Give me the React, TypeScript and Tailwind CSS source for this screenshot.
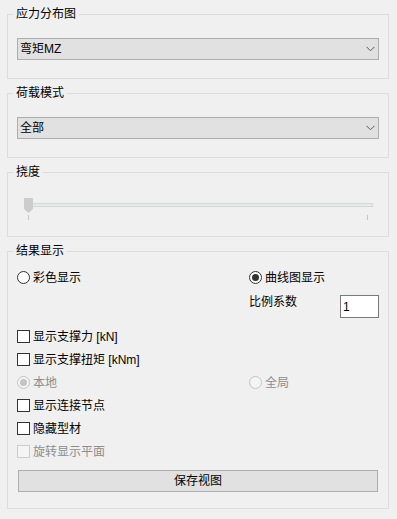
import React from 'react';

const font = { fontFamily: '"Liberation Sans", "Noto Sans CJK SC", sans-serif' };

const Chevron = () => (
  <svg width="9" height="6" viewBox="0 0 9 6" className="shrink-0">
    <path d="M0.5 0.8 L4.5 4.8 L8.5 0.8" fill="none" stroke="#5a5a5a" strokeWidth="1" />
  </svg>
);

const Select: React.FC<{ value: string }> = ({ value }) => (
  <div className="mt-[16px] h-[22px] w-full border border-[#adadad] bg-[#e1e1e1] pl-[2px] pr-[3px] flex items-center justify-between">
    <span className="leading-4">{value}</span>
    <Chevron />
  </div>
);

const Group: React.FC<{ title: string; className?: string; children: React.ReactNode }> = ({ title, className = '', children }) => (
  <fieldset className={`border border-[#dcdcdc] px-[9px] ${className}`}>
    <legend className="ml-[-4px] px-[3px] leading-4">{title}</legend>
    {children}
  </fieldset>
);

const Radio: React.FC<{ checked?: boolean; disabled?: boolean; label: string }> = ({ checked, disabled, label }) => (
  <label className={`flex items-center gap-[3px] leading-4 ${disabled ? 'text-[#8d8d8d]' : 'text-black'}`}>
    <span
      className={`w-[13px] h-[13px] rounded-full border flex items-center justify-center ${
        disabled ? 'border-[#c4c4c4] bg-[#f4f4f4]' : 'border-[#333333] bg-white'
      }`}
    >
      {checked && <span className={`w-[7px] h-[7px] rounded-full ${disabled ? 'bg-[#c4c4c4]' : 'bg-[#333333]'}`} />}
    </span>
    {label}
  </label>
);

const Check: React.FC<{ disabled?: boolean; children: React.ReactNode }> = ({ disabled, children }) => (
  <label className={`h-[23px] flex items-center gap-[3px] leading-4 ${disabled ? 'text-[#8d8d8d]' : 'text-black'}`}>
    <span className={`w-[13px] h-[13px] border ${disabled ? 'border-[#cccccc] bg-[#f4f4f4]' : 'border-[#333333] bg-white'}`} />
    {children}
  </label>
);

export default function App() {
  return (
    <div className="w-[397px] h-[519px] bg-[#f0f0f0] pt-[6px] pl-[7px] pr-[8px] text-[12px] text-black" style={font}>
      <Group title="应力分布图" className="pb-[18px]">
        <Select value="弯矩MZ" />
      </Group>

      <Group title="荷载模式" className="mt-[6px] pb-[18px]">
        <Select value="全部" />
      </Group>

      <Group title="挠度" className="mt-[6px] pb-[16px]">
        <div className="relative mt-[18px] h-[22px]">
          <div className="absolute left-[7px] top-[5px] h-[4px] w-[349px] border border-[#d6d6d6] bg-[#e7eaea]" />
          <svg width="9" height="15" viewBox="0 0 9 15" className="absolute left-[7px] top-0">
            <polygon points="0,0 9,0 9,11 4.5,15 0,11" fill="#cccccc" />
          </svg>
          <div className="absolute left-[11px] top-[17px] h-[5px] w-px bg-[#c4c4c4]" />
          <div className="absolute left-[350px] top-[17px] h-[5px] w-px bg-[#c4c4c4]" />
        </div>
      </Group>

      <Group title="结果显示" className="mt-[6px] pb-[16px]">
        <div className="mt-[7px] grid grid-cols-[232px_130px] h-[23px] items-center">
          <Radio label="彩色显示" />
          <Radio label="曲线图显示" checked />
        </div>
        <div className="mt-[6px] grid grid-cols-[232px_130px] items-start">
          <div />
          <div className="flex justify-between">
            <span className="leading-4 mt-[-1px]">比例系数</span>
            <div className="w-[39px] h-[23px] border border-[#7a7a7a] bg-white pl-[2px] flex items-center leading-4">1</div>
          </div>
        </div>
        <div className="mt-[7px] flex flex-col">
          <Check>
            显示支撑力 [kN]
          </Check>
          <Check>
            显示支撑扭矩 [kNm]
          </Check>
          <div className="grid grid-cols-[232px_130px] h-[23px] items-center">
            <Radio label="本地" checked disabled />
            <Radio label="全局" disabled />
          </div>
          <Check>显示连接节点</Check>
          <Check>隐藏型材</Check>
          <Check disabled>旋转显示平面</Check>
        </div>
        <button className="mt-[7px] ml-[1px] w-[360px] h-[22px] border border-[#adadad] bg-[#e1e1e1] leading-4 flex items-center justify-center">
          保存视图
        </button>
      </Group>
    </div>
  );
}
